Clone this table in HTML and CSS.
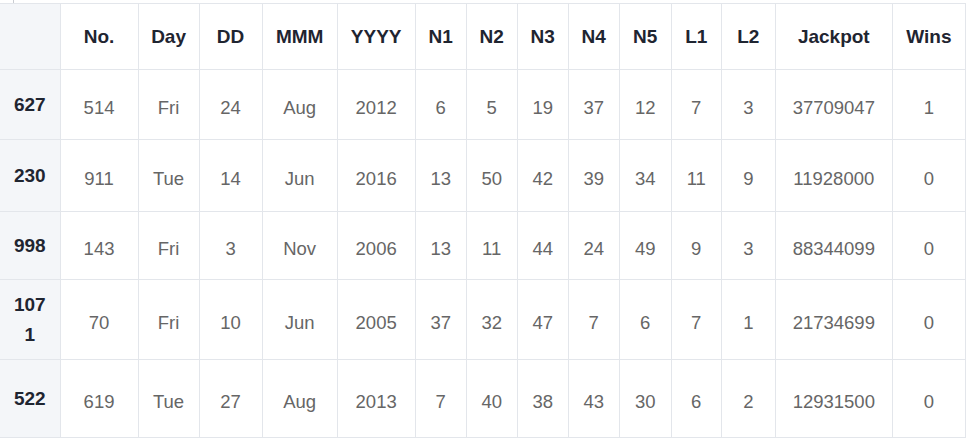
FILE: index.html
```html
<!DOCTYPE html>
<html>
<head>
<meta charset="utf-8">
<link rel="stylesheet" href="styles.css">
</head>
<body>
<div class="topstrip"><span class="tick"></span></div>
<table class="grid">
  <colgroup>
    <col class="c-rh"><col class="c-no"><col class="c-day"><col class="c-dd"><col class="c-mmm"><col class="c-yyyy">
    <col class="c-n"><col class="c-n"><col class="c-n"><col class="c-n"><col class="c-n5">
    <col class="c-l1"><col class="c-l2"><col class="c-jack"><col class="c-wins">
  </colgroup>
  <thead>
    <tr class="r-head">
      <th class="rh"></th><th>No.</th><th>Day</th><th>DD</th><th>MMM</th><th>YYYY</th><th>N1</th><th>N2</th><th>N3</th><th>N4</th><th>N5</th><th>L1</th><th>L2</th><th>Jackpot</th><th>Wins</th>
    </tr>
  </thead>
  <tbody>
    <tr class="r1"><th class="rh">627</th><td>514</td><td>Fri</td><td>24</td><td>Aug</td><td>2012</td><td>6</td><td>5</td><td>19</td><td>37</td><td>12</td><td>7</td><td>3</td><td>37709047</td><td>1</td></tr>
    <tr class="r2"><th class="rh">230</th><td>911</td><td>Tue</td><td>14</td><td>Jun</td><td>2016</td><td>13</td><td>50</td><td>42</td><td>39</td><td>34</td><td>11</td><td>9</td><td>11928000</td><td>0</td></tr>
    <tr class="r3"><th class="rh">998</th><td>143</td><td>Fri</td><td>3</td><td>Nov</td><td>2006</td><td>13</td><td>11</td><td>44</td><td>24</td><td>49</td><td>9</td><td>3</td><td>88344099</td><td>0</td></tr>
    <tr class="r4"><th class="rh">1071</th><td>70</td><td>Fri</td><td>10</td><td>Jun</td><td>2005</td><td>37</td><td>32</td><td>47</td><td>7</td><td>6</td><td>7</td><td>1</td><td>21734699</td><td>0</td></tr>
    <tr class="r5"><th class="rh">522</th><td>619</td><td>Tue</td><td>27</td><td>Aug</td><td>2013</td><td>7</td><td>40</td><td>38</td><td>43</td><td>30</td><td>6</td><td>2</td><td>12931500</td><td>0</td></tr>
  </tbody>
</table>
</body>
</html>
```

FILE: styles.css
```css
html, body {
  margin: 0;
  padding: 0;
  background: #ffffff;
}
body {
  font-family: "Liberation Sans", Arial, sans-serif;
  width: 968px;
  height: 439px;
  overflow: hidden;
}
.topstrip {
  height: 3px;
  display: flex;
}
.tick {
  margin-left: 13px;
  width: 1px;
  height: 3px;
  background: #c9ccd2;
}
.grid {
  border-collapse: collapse;
  table-layout: fixed;
  width: 966px;
}
.c-rh { width: 60px; }
.c-no { width: 78px; }
.c-day { width: 61px; }
.c-dd { width: 63px; }
.c-mmm { width: 75px; }
.c-yyyy { width: 78px; }
.c-n { width: 51px; }
.c-n5 { width: 52px; }
.c-l1 { width: 50px; }
.c-l2 { width: 54px; }
.c-jack { width: 117px; }
.c-wins { width: 73px; }

.grid th, .grid td {
  border: 1px solid #e3e6eb;
  text-align: center;
  vertical-align: middle;
  padding: 0 12px;
  font-size: 18.5px;
  line-height: 30px;
}
.grid tr > :first-child {
  border-left: none;
}
.grid th {
  color: #1f2531;
  font-weight: bold;
  font-size: 19px;
}
.grid td {
  color: #666666;
  padding-top: 6px;
}
.grid .rh {
  background: #f4f6f9;
  padding: 0 12px;
  word-break: break-all;
}
.r-head { height: 66px; }
.r1 { height: 70px; }
.r2 { height: 72px; }
.r3 { height: 68px; }
.r4 { height: 80px; }
.r5 { height: 78px; }
```
